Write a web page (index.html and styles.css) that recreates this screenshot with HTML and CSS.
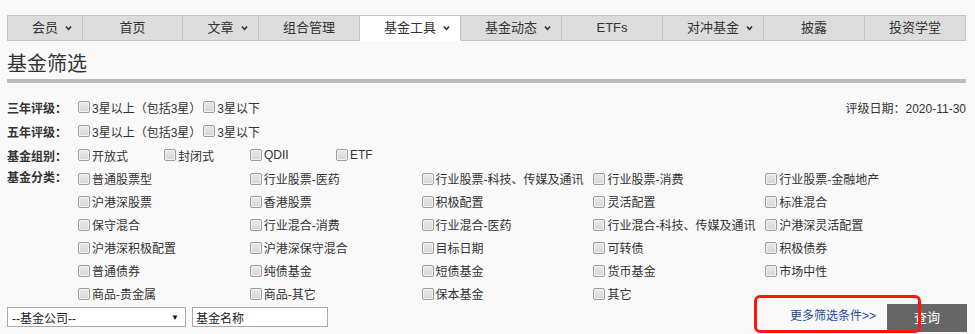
FILE: index.html
```html
<!DOCTYPE html>
<html lang="zh-CN">
<head>
<meta charset="utf-8">
<title>基金筛选</title>
<link rel="stylesheet" href="styles.css">
</head>
<body>
<div class="page">
  <nav class="nav">
    <a class="tab w-s first"><span class="t">会员<svg class="caret" viewBox="0 0 7 5" width="7" height="5"><path d="M1 1 L3.5 4 L6 1" /></svg></span></a>
    <a class="tab w-m"><span class="t">首页</span></a>
    <a class="tab w-s2"><span class="t">文章<svg class="caret" viewBox="0 0 7 5" width="7" height="5"><path d="M1 1 L3.5 4 L6 1" /></svg></span></a>
    <a class="tab w-l"><span class="t">组合管理</span></a>
    <a class="tab w-l active"><span class="t">基金工具<svg class="caret" viewBox="0 0 7 5" width="7" height="5"><path d="M1 1 L3.5 4 L6 1" /></svg></span></a>
    <a class="tab w-l"><span class="t">基金动态<svg class="caret" viewBox="0 0 7 5" width="7" height="5"><path d="M1 1 L3.5 4 L6 1" /></svg></span></a>
    <a class="tab w-l"><span class="t">ETFs</span></a>
    <a class="tab w-l"><span class="t">对冲基金<svg class="caret" viewBox="0 0 7 5" width="7" height="5"><path d="M1 1 L3.5 4 L6 1" /></svg></span></a>
    <a class="tab w-l"><span class="t">披露</span></a>
    <a class="tab w-l"><span class="t">投资学堂</span></a>
  </nav>

  <h1 class="title">基金筛选</h1>
  <div class="rule"></div>

  <div class="filters">
    <div class="row">
      <span class="lbl">三年评级：</span>
      <label class="ck tight"><input type="checkbox">3星以上（包括3星）</label>
      <label class="ck tight"><input type="checkbox">3星以下</label>
      <span class="date">评级日期：2020-11-30</span>
    </div>
    <div class="row">
      <span class="lbl">五年评级：</span>
      <label class="ck tight"><input type="checkbox">3星以上（包括3星）</label>
      <label class="ck tight"><input type="checkbox">3星以下</label>
    </div>
    <div class="row">
      <span class="lbl">基金组别：</span>
      <div class="group">
        <label class="ck"><input type="checkbox">开放式</label>
        <label class="ck"><input type="checkbox">封闭式</label>
        <label class="ck"><input type="checkbox">QDII</label>
        <label class="ck"><input type="checkbox">ETF</label>
      </div>
    </div>
    <div class="row-grid">
      <span class="lbl lbl-grid">基金分类：</span>
      <div class="grid">
        <label class="ck"><input type="checkbox">普通股票型</label>
        <label class="ck"><input type="checkbox">行业股票-医药</label>
        <label class="ck"><input type="checkbox">行业股票-科技、传媒及通讯</label>
        <label class="ck"><input type="checkbox">行业股票-消费</label>
        <label class="ck"><input type="checkbox">行业股票-金融地产</label>

        <label class="ck"><input type="checkbox">沪港深股票</label>
        <label class="ck"><input type="checkbox">香港股票</label>
        <label class="ck"><input type="checkbox">积极配置</label>
        <label class="ck"><input type="checkbox">灵活配置</label>
        <label class="ck"><input type="checkbox">标准混合</label>

        <label class="ck"><input type="checkbox">保守混合</label>
        <label class="ck"><input type="checkbox">行业混合-消费</label>
        <label class="ck"><input type="checkbox">行业混合-医药</label>
        <label class="ck"><input type="checkbox">行业混合-科技、传媒及通讯</label>
        <label class="ck"><input type="checkbox">沪港深灵活配置</label>

        <label class="ck"><input type="checkbox">沪港深积极配置</label>
        <label class="ck"><input type="checkbox">沪港深保守混合</label>
        <label class="ck"><input type="checkbox">目标日期</label>
        <label class="ck"><input type="checkbox">可转债</label>
        <label class="ck"><input type="checkbox">积极债券</label>

        <label class="ck"><input type="checkbox">普通债券</label>
        <label class="ck"><input type="checkbox">纯债基金</label>
        <label class="ck"><input type="checkbox">短债基金</label>
        <label class="ck"><input type="checkbox">货币基金</label>
        <label class="ck"><input type="checkbox">市场中性</label>

        <label class="ck"><input type="checkbox">商品-贵金属</label>
        <label class="ck"><input type="checkbox">商品-其它</label>
        <label class="ck"><input type="checkbox">保本基金</label>
        <label class="ck"><input type="checkbox">其它</label>
      </div>
    </div>
  </div>

  <div class="bottom">
    <div class="select"><span>--基金公司--</span><span class="sel-arrow">▼</span></div>
    <input class="name" type="text" value="基金名称">
    <a class="more">更多筛选条件&gt;&gt;</a>
    <button class="query" type="button">查询</button>
  </div>

  <div class="annot"></div>
</div>
</body>
</html>
```

FILE: styles.css
```css
* { box-sizing: border-box; }

html, body {
  margin: 0;
  padding: 0;
  background: #f9f9f9;
}

body {
  font-family: "Liberation Sans", "Noto Sans CJK SC", sans-serif;
  font-size: 12px;
  color: #333;
}

.page {
  position: relative;
  width: 975px;
  height: 334px;
  overflow: hidden;
  padding: 15px 9px 0 7px;
}

/* nav */
.nav {
  display: flex;
  height: 26px;
  border-left: 1px solid #c3c3c3;
}

.tab {
  display: flex;
  align-items: center;
  justify-content: center;
  height: 26px;
  border-top: 1px solid #c3c3c3;
  border-bottom: 1px solid #c3c3c3;
  border-right: 1px solid #c3c3c3;
  background: #dcdcdc;
  font-size: 13px;
  color: #333;
  text-decoration: none;
}

.tab.w-s { width: 75px; }
.tab.w-s2 { width: 76px; }
.tab.w-m { width: 100px; }
.tab.w-l { width: 101px; }

.tab.active {
  background: #fff;
  border-bottom-color: #fff;
}

.t {
  position: relative;
  line-height: 24px;
}

.caret {
  position: absolute;
  left: calc(100% + 7px);
  top: 50%;
  transform: translateY(-50%);
  fill: none;
  stroke: #333;
  stroke-width: 1.7;
}

/* title */
.title {
  margin: 0;
  height: 38px;
  padding-top: 8px;
  line-height: 30px;
  font-size: 20px;
  font-weight: normal;
  color: #333;
}

.rule {
  height: 4px;
  background: #bdbdbd;
}

/* filters */
.filters {
  margin-top: 12px;
}

.row {
  display: flex;
  align-items: center;
  height: 24px;
}

.lbl {
  width: 71px;
  flex: none;
  font-weight: bold;
  color: #333;
  white-space: nowrap;
}

.ck {
  display: flex;
  align-items: center;
  white-space: nowrap;
  color: #333;
}

.ck.tight { margin-right: 2px; }

.ck input {
  -webkit-appearance: none;
  appearance: none;
  width: 12px;
  height: 12px;
  margin: 0 2px 0 0;
  border: 1px solid #9c9c9c;
  border-radius: 2px;
  background: linear-gradient(#e9e9e9, #d6d6d6);
  box-shadow: inset 0 0 0 1px #f2f2f2;
  flex: none;
}

.date {
  margin-left: auto;
}

.group {
  display: grid;
  grid-template-columns: repeat(4, 86px);
}

.row-grid {
  display: flex;
  align-items: flex-start;
}

.lbl-grid {
  height: 23px;
  line-height: 23px;
}

.grid {
  display: grid;
  grid-template-columns: repeat(5, 171.8px);
  grid-auto-rows: 23px;
}

/* bottom row */
.bottom {
  display: flex;
  align-items: flex-start;
  margin-top: -1px;
}

.select {
  margin-top: 3px;
  width: 179px;
  height: 20px;
  display: flex;
  align-items: center;
  justify-content: space-between;
  padding: 0 6px 0 4px;
  background: #fff;
  border: 1px solid #a9a9a9;
  color: #222;
}

.sel-arrow {
  font-size: 8px;
  color: #111;
}

.name {
  margin: 3px 0 0 6px;
  width: 136px;
  height: 20px;
  padding: 0 3px;
  border: 1px solid #a9a9a9;
  background: #fff;
  font-family: "Liberation Sans", "Noto Sans CJK SC", sans-serif;
  font-size: 12px;
  color: #222;
  outline: none;
}

.more {
  margin-left: auto;
  margin-right: 11px;
  line-height: 25px;
  color: #1a4d9c;
  text-decoration: none;
  white-space: nowrap;
}

.query {
  width: 80px;
  height: 28px;
  margin-right: -1px;
  padding: 0 0 3px;
  border: none;
  background: #666;
  color: #fff;
  font-family: "Liberation Sans", "Noto Sans CJK SC", sans-serif;
  font-size: 13px;
}

/* annotation overlay */
.annot {
  position: absolute;
  left: 754px;
  top: 295px;
  width: 167px;
  height: 38px;
  border: 3px solid #ff1414;
  border-radius: 6px;
  pointer-events: none;
}
```
